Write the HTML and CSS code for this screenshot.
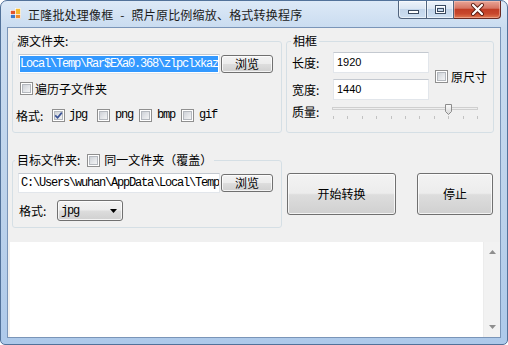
FILE: index.html
```html
<!DOCTYPE html>
<html lang="zh-CN">
<head>
<meta charset="utf-8">
<title>正隆批处理像框</title>
<link rel="stylesheet" href="styles.css">
</head>
<body>
<div class="window">
  <div class="titlebar">
    <svg class="app-icon" width="16" height="16" viewBox="0 0 16 16">
      <rect x="0.5" y="5.5" width="5" height="4" fill="#e2542d" stroke="#fff" stroke-width="0.6"/>
      <rect x="5.5" y="3.5" width="5" height="6" fill="#f5b82e" stroke="#fff" stroke-width="0.6"/>
      <rect x="0.5" y="9.5" width="5" height="4" fill="#3d78c9" stroke="#fff" stroke-width="0.6"/>
      <rect x="5.5" y="9.5" width="5" height="4" fill="#ef8a2c" stroke="#fff" stroke-width="0.6"/>
    </svg>
    <span class="title">正隆批处理像框 - 照片原比例缩放、格式转换程序</span>
    <div class="caption">
      <span class="cap cap-min">
        <svg width="26" height="17" viewBox="0 0 26 17"><rect x="8.5" y="9.5" width="10" height="3" fill="#fff" stroke="#3a4a60"/></svg>
      </span>
      <span class="cap cap-max">
        <svg width="26" height="17" viewBox="0 0 26 17"><rect x="8.5" y="4.5" width="10" height="8" fill="none" stroke="#3a4a60"/><rect x="9.5" y="5.5" width="8" height="6" fill="none" stroke="#fff"/><rect x="10.5" y="7.5" width="6" height="3" fill="none" stroke="#3a4a60"/></svg>
      </span>
      <span class="cap cap-close">
        <svg width="45" height="17" viewBox="0 0 45 17"><path d="M18 4 L27 13 M27 4 L18 13" stroke="#5a1c12" stroke-width="4" stroke-linecap="round"/><path d="M18 4 L27 13 M27 4 L18 13" stroke="#fff" stroke-width="2.2" stroke-linecap="round"/></svg>
      </span>
    </div>
  </div>
  <div class="frame">
    <div class="client">
      <div class="row row-top">
        <fieldset class="group g-src">
          <legend>源文件夹:</legend>
          <div class="path-row">
            <div class="textbox path"><span class="sel">Local\Temp\Rar$EXa0.368\zlpclxkaz</span></div>
            <button class="btn browse">浏览</button>
          </div>
          <div class="check-row sub"><span class="cb"></span><span>遍历子文件夹</span></div>
          <div class="fmt-row">
            <span class="fmt-label">格式:</span>
            <span class="chk-item w-jpg"><span class="cb"><svg width="9" height="9" viewBox="0 0 9 9"><path d="M1.2 4.4 L3.6 6.8 L7.8 1.6" fill="none" stroke="#3c5496" stroke-width="1.7"/></svg></span><span class="mono">jpg</span></span>
            <span class="chk-item w-png"><span class="cb"></span><span class="mono">png</span></span>
            <span class="chk-item w-bmp"><span class="cb"></span><span class="mono">bmp</span></span>
            <span class="chk-item"><span class="cb"></span><span class="mono">gif</span></span>
          </div>
        </fieldset>
        <fieldset class="group g-frame">
          <legend>相框</legend>
          <div class="frame-grid">
            <span class="lbl l1">长度:</span>
            <div class="textbox num t1">1920</div>
            <span class="lbl l2">宽度:</span>
            <div class="textbox num t2">1440</div>
            <span class="keep"><span class="cb"></span><span>原尺寸</span></span>
            <span class="lbl l3">质量:</span>
            <svg class="slider" width="148" height="18" viewBox="0 0 148 18">
              <defs>
                <linearGradient id="thumbg" x1="0" y1="0" x2="0" y2="1">
                  <stop offset="0" stop-color="#fbfbfb"/>
                  <stop offset="1" stop-color="#d6d6d6"/>
                </linearGradient>
              </defs>
              <rect x="1.5" y="4.5" width="145" height="2" fill="#eeeeee" stroke="#cfcfcf"/>
              <g fill="#c2c2c2">
                <rect x="2" y="13" width="1" height="3"/>
                <rect x="16" y="13" width="1" height="3"/>
                <rect x="31" y="13" width="1" height="3"/>
                <rect x="45" y="13" width="1" height="3"/>
                <rect x="60" y="13" width="1" height="3"/>
                <rect x="74" y="13" width="1" height="3"/>
                <rect x="88" y="13" width="1" height="3"/>
                <rect x="103" y="13" width="1" height="3"/>
                <rect x="117" y="13" width="1" height="3"/>
                <rect x="132" y="13" width="1" height="3"/>
                <rect x="146" y="13" width="1" height="3"/>
              </g>
              <path d="M114.5 1.5 H120.5 V8.5 L117.5 11.5 L114.5 8.5 Z" fill="url(#thumbg)" stroke="#8c8c8c"/>
            </svg>
          </div>
        </fieldset>
      </div>
      <div class="row row-mid">
        <fieldset class="group g-dst">
          <legend><span>目标文件夹:</span><span class="cb"></span><span class="same">同一文件夹（覆盖）</span></legend>
          <div class="path-row dst">
            <div class="textbox path"><span class="plain">C:\Users\wuhan\AppData\Local\Temp</span></div>
            <button class="btn browse">浏览</button>
          </div>
          <div class="fmt-row2">
            <span class="fmt-label2">格式:</span>
            <span class="btn combo"><span class="mono">jpg</span><svg width="7" height="4" viewBox="0 0 7 4"><path d="M0 0 H7 L3.5 4 Z" fill="#000"/></svg></span>
          </div>
        </fieldset>
        <button class="btn big start">开始转换</button>
        <button class="btn big stop">停止</button>
      </div>
      <div class="log">
        <div class="log-text"></div>
        <div class="vscroll">
          <svg width="7" height="4" viewBox="0 0 7 4"><path d="M0 4 L3.5 0 L7 4 Z" fill="#8e8e8e"/></svg>
          <svg width="7" height="4" viewBox="0 0 7 4"><path d="M0 0 H7 L3.5 4 Z" fill="#8e8e8e"/></svg>
        </div>
      </div>
    </div>
  </div>
</div>
</body>
</html>
```

FILE: styles.css
```css
* { box-sizing: border-box; }
html, body { margin: 0; padding: 0; }
body {
  width: 508px;
  height: 345px;
  overflow: hidden;
  background: #ffffff;
  font-family: "Noto Sans CJK SC", "Noto Sans", sans-serif;
  font-size: 12px;
  color: #000;
}

.window {
  width: 508px;
  height: 345px;
  border: 1px solid #52729a;
  border-radius: 7px 7px 5px 5px;
  background: linear-gradient(#dde9f7 0px, #cadcf0 26px, #bcd2eb 60%, #adc9ea 100%);
  display: flex;
  flex-direction: column;
  overflow: hidden;
}

/* ---------- title bar ---------- */
.titlebar {
  height: 26px;
  flex: none;
  display: flex;
  align-items: flex-start;
  padding-left: 9px;
}
.app-icon { flex: none; margin-top: 4px; }
.title {
  margin-left: 2px;
  margin-top: 7px;
  line-height: 14px;
  font-size: 12px;
  color: #1b1b1b;
  white-space: nowrap;
  word-spacing: 4px;
  letter-spacing: 0.2px;
}
.caption {
  margin-left: auto;
  margin-right: 6px;
  display: flex;
  height: 18px;
}
.cap {
  display: flex;
  align-items: center;
  justify-content: center;
  height: 18px;
  border: 1px solid #51647e;
  border-top: none;
  background: linear-gradient(#eef3fa 0%, #dbe6f3 45%, #c3d5ea 50%, #cddff2 100%);
  box-shadow: inset 0 0 0 1px rgba(255,255,255,0.55);
}
.cap-min { width: 28px; border-radius: 0 0 0 4px; border-right: none; }
.cap-max { width: 28px; }
.cap-close {
  width: 47px;
  border-left: none;
  border-color: #6a2a22;
  border-radius: 0 0 4px 0;
  background: linear-gradient(#e8a597 0%, #d67563 42%, #c13d25 50%, #c8472c 75%, #e07a52 100%);
  box-shadow: inset 0 0 0 1px rgba(255,210,200,0.45);
}

/* ---------- frame & client ---------- */
.frame {
  flex: 1;
  padding: 0 6px 6px;
  display: flex;
}
.client {
  flex: 1;
  border: 1px solid #7a95b8;
  background: #f0f0f0;
  padding-top: 6px;
  display: flex;
  flex-direction: column;
}

.row { display: flex; align-items: flex-start; margin-left: 4px; }
.row-top { height: 99px; }
.row-mid { height: 76px; margin-top: 19px; }

/* ---------- group boxes ---------- */
.group {
  margin: 0;
  padding: 0;
  min-width: 0;
  border: 1px solid #d5dfe5;
  border-radius: 3px;
}
.group legend {
  padding: 0 2px;
  margin-left: 2px;
  font-size: 12px;
  line-height: 14px;
  height: 14px;
}
.g-src { width: 270px; height: 99px; }
.g-frame { width: 208px; height: 99px; margin-left: 4px; }
.g-frame legend { margin-left: 4px; }
.g-dst { width: 270px; height: 76px; }
.g-dst legend {
  display: flex;
  align-items: center;
  height: 16px;
  line-height: 16px;
}
.g-dst legend .cb { margin-left: 7px; }
.g-dst legend .same { margin-left: 4px; }

/* ---------- controls ---------- */
.textbox {
  background: #fff;
  border: 1px solid #e2e6eb;
  border-top-color: #c4c9d0;
  overflow: hidden;
  white-space: nowrap;
}
.path {
  width: 202px;
  height: 20px;
  padding: 1px 0 0 1px;
  font-family: "Liberation Mono", "DejaVu Sans Mono", monospace;
  font-size: 12px;
  letter-spacing: -1.2px;
  line-height: 16px;
}
.sel { background: #3399ff; color: #fff; display: inline-block; height: 16px; }
.plain { display: inline-block; height: 16px; padding-left: 1px; }

.path-row {
  display: flex;
  align-items: center;
  height: 20px;
  margin: 6px 0 0 5px;
}
.path-row.dst { margin-top: 5px; }

.btn {
  display: flex;
  align-items: center;
  justify-content: center;
  margin: 0;
  padding: 0;
  border: 1px solid #707070;
  border-radius: 3px;
  background: linear-gradient(#f3f3f3 0%, #ececec 48%, #dddddd 52%, #d0d0d0 100%);
  box-shadow: inset 0 0 0 1px rgba(255,255,255,0.75);
  font-family: "Noto Sans CJK SC", "Noto Sans", sans-serif;
  font-size: 12px;
  line-height: 14px;
  color: #000;
}
.browse { width: 52px; height: 18px; margin-left: 1px; }
.big { height: 42px; margin-top: 21px; }
.start { width: 109px; margin-left: 5px; }
.stop { width: 76px; margin-left: 21px; }

.combo {
  width: 66px;
  height: 21px;
  justify-content: space-between;
  padding: 0 5px 0 3px;
}

.cb {
  flex: none;
  display: inline-flex;
  align-items: center;
  justify-content: center;
  width: 13px;
  height: 13px;
  border: 1px solid #8f8f8f;
  padding: 1px;
  background: linear-gradient(135deg, #c9cdd3 0%, #e6e8eb 60%, #f7f7f7 100%) content-box, #fff;
  box-shadow: inset 0 0 0 1px #fff, inset 0 0 0 2px #b4b8be;
}
.cb svg { display: block; }

.mono {
  font-family: "Liberation Mono", "DejaVu Sans Mono", monospace;
  font-size: 12px;
  letter-spacing: -1.2px;
}

.check-row.sub {
  display: flex;
  align-items: center;
  gap: 2px;
  height: 16px;
  margin: 6px 0 0 7px;
}
.fmt-row {
  display: flex;
  align-items: center;
  height: 16px;
  margin: 11px 0 0 3px;
}
.fmt-label { width: 36px; }
.chk-item { display: flex; align-items: center; gap: 5px; width: 43px; }
.w-jpg { width: 45px; gap: 4px; }
.w-png { width: 42px; }
.w-bmp { width: 42px; }

.fmt-row2 {
  display: flex;
  align-items: center;
  height: 21px;
  margin: 7px 0 0 6px;
}
.fmt-label2 { width: 38px; }

/* frame grid */
.frame-grid {
  display: grid;
  grid-template-columns: 41px 96px auto;
  grid-template-rows: 21px 21px 18px;
  row-gap: 6px;
  margin: 4px 0 0 5px;
}
.lbl { line-height: 21px; }
.l1 { grid-area: 1 / 1; }
.t1 { grid-area: 1 / 2; }
.l2 { grid-area: 2 / 1; }
.t2 { grid-area: 2 / 2; }
.l3 { grid-area: 3 / 1; margin-top: -3px; line-height: 18px; }
.keep {
  grid-area: 1 / 3 / 3 / 4;
  align-self: center;
  display: flex;
  align-items: center;
  gap: 3px;
  margin-left: 6px;
}
.num {
  font-family: "Liberation Sans", Arial, sans-serif;
  font-size: 11px;
  line-height: 19px;
  padding-left: 3px;
}
.slider {
  grid-area: 3 / 2 / 4 / 4;
  display: block;
  margin: -3px 0 0 -2px;
}

/* log */
.log {
  display: flex;
  height: 95px;
  margin: 14px 0 0 2px;
}
.log-text { flex: 1; background: #fff; }
.vscroll {
  width: 17px;
  background: #f2f2f2;
  border-left: 1px solid #ececec;
  display: flex;
  flex-direction: column;
  align-items: center;
  justify-content: space-between;
  padding: 8px 0;
}
.vscroll svg { display: block; }
```
